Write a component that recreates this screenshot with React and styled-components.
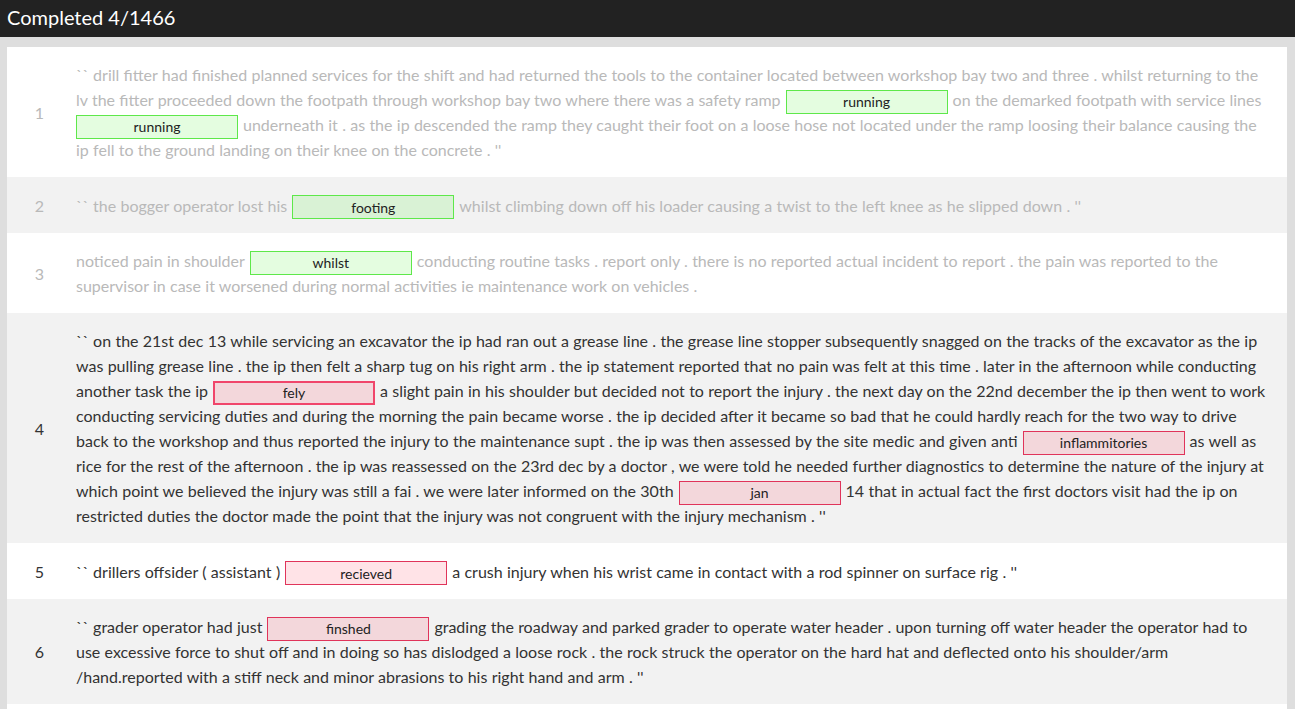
import React from "react";
import styled, { createGlobalStyle } from "styled-components";

const GlobalStyle = createGlobalStyle`
  html, body {
    margin: 0;
    padding: 0;
    background: #dedede;
    font-family: "Lato", "Open Sans", sans-serif;
    overflow: hidden;
  }
`;

const rows = [
  {
    done: true,
    parts: [
      "`` drill fitter had finished planned services for the shift and had returned the tools to the container located between workshop bay two and three . whilst returning to the lv the fitter proceeded down the footpath through workshop bay two where there was a safety ramp",
      { word: "running", ok: true },
      "on the demarked footpath with service lines",
      { word: "running", ok: true },
      "underneath it . as the ip descended the ramp they caught their foot on a loose hose not located under the ramp loosing their balance causing the ip fell to the ground landing on their knee on the concrete . ''",
    ],
  },
  {
    done: true,
    parts: [
      "`` the bogger operator lost his",
      { word: "footing", ok: true },
      "whilst climbing down off his loader causing a twist to the left knee as he slipped down . ''",
    ],
  },
  {
    done: true,
    parts: [
      "noticed pain in shoulder",
      { word: "whilst", ok: true },
      "conducting routine tasks . report only . there is no reported actual incident to report . the pain was reported to the supervisor in case it worsened during normal activities ie maintenance work on vehicles .",
    ],
  },
  {
    parts: [
      "`` on the 21st dec 13 while servicing an excavator the ip had ran out a grease line . the grease line stopper subsequently snagged on the tracks of the excavator as the ip was pulling grease line . the ip then felt a sharp tug on his right arm . the ip statement reported that no pain was felt at this time . later in the afternoon while conducting another task the ip",
      { word: "fely", focus: true },
      "a slight pain in his shoulder but decided not to report the injury . the next day on the 22nd december the ip then went to work conducting servicing duties and during the morning the pain became worse . the ip decided after it became so bad that he could hardly reach for the two way to drive back to the workshop and thus reported the injury to the maintenance supt . the ip was then assessed by the site medic and given anti",
      { word: "inflammitories" },
      "as well as rice for the rest of the afternoon . the ip was reassessed on the 23rd dec by a doctor , we were told he needed further diagnostics to determine the nature of the injury at which point we believed the injury was still a fai . we were later informed on the 30th",
      { word: "jan" },
      "14 that in actual fact the first doctors visit had the ip on restricted duties the doctor made the point that the injury was not congruent with the injury mechanism . ''",
    ],
  },
  {
    parts: [
      "`` drillers offsider ( assistant )",
      { word: "recieved" },
      "a crush injury when his wrist came in contact with a rod spinner on surface rig . ''",
    ],
  },
  {
    parts: [
      "`` grader operator had just",
      { word: "finshed" },
      "grading the roadway and parked grader to operate water header . upon turning off water header the operator had to use excessive force to shut off and in doing so has dislodged a loose rock . the rock struck the operator on the hard hat and deflected onto his shoulder/arm /hand.reported with a stiff neck and minor abrasions to his right hand and arm . ''",
    ],
  },
  {
    parts: ["`` while walking to the crib room the operator"],
  },
];

function App() {
  return (
    <>
      <GlobalStyle />
      <Header>Completed 4/1466</Header>
      <Panel>
        {rows.map((row, i) => (
          <Row key={i} $done={row.done}>
            <Num>{i + 1}</Num>
            <Sentence>
              {row.parts.map((p, j) =>
                typeof p === "string" ? (
                  <span key={j}>{p}</span>
                ) : (
                  <Word
                    key={j}
                    readOnly
                    value={p.word}
                    $ok={p.ok}
                    $focus={p.focus}
                  />
                )
              )}
            </Sentence>
          </Row>
        ))}
      </Panel>
    </>
  );
}

const Header = styled.div`
  background: #222222;
  color: #ffffff;
  height: 37px;
  line-height: 34px;
  padding-left: 7px;
  font-size: 20px;
`;

const Panel = styled.div`
  margin: 10px 8px 0 7px;
  background: #ffffff;
`;

const Row = styled.div`
  box-sizing: border-box;
  min-height: 56px;
  display: flex;
  align-items: center;
  padding: 15px 14px 15px 0;
  color: ${(p) => (p.$done ? "#b9b9b9" : "#333333")};
  &:nth-child(even) {
    background: #f2f2f2;
  }
`;

const Num = styled.div`
  width: 65px;
  margin-right: 4px;
  flex: none;
  text-align: center;
  font-size: 16px;
`;

const Sentence = styled.div`
  flex: 1;
  font-size: 16px;
  line-height: 25px;
  word-spacing: 0.2px;
  span {
    margin-right: 5px;
  }
`;

const Word = styled.input`
  box-sizing: border-box;
  width: 162px;
  height: 24px;
  margin: -6px 5px -6px 0;
  padding: 0;
  text-align: center;
  font-family: "Lato", sans-serif;
  font-size: 14px;
  color: #222;
  outline: none;
  vertical-align: middle;
  background: ${(p) =>
    p.$ok ? "rgba(120, 245, 100, 0.2)" : "rgba(255, 40, 70, 0.13)"};
  border: ${(p) => (p.$focus ? "2px" : "1px")} solid
    ${(p) => (p.$ok ? "#5ee84a" : p.$focus ? "#f0466b" : "#e0345a")};
`;

export default App;
